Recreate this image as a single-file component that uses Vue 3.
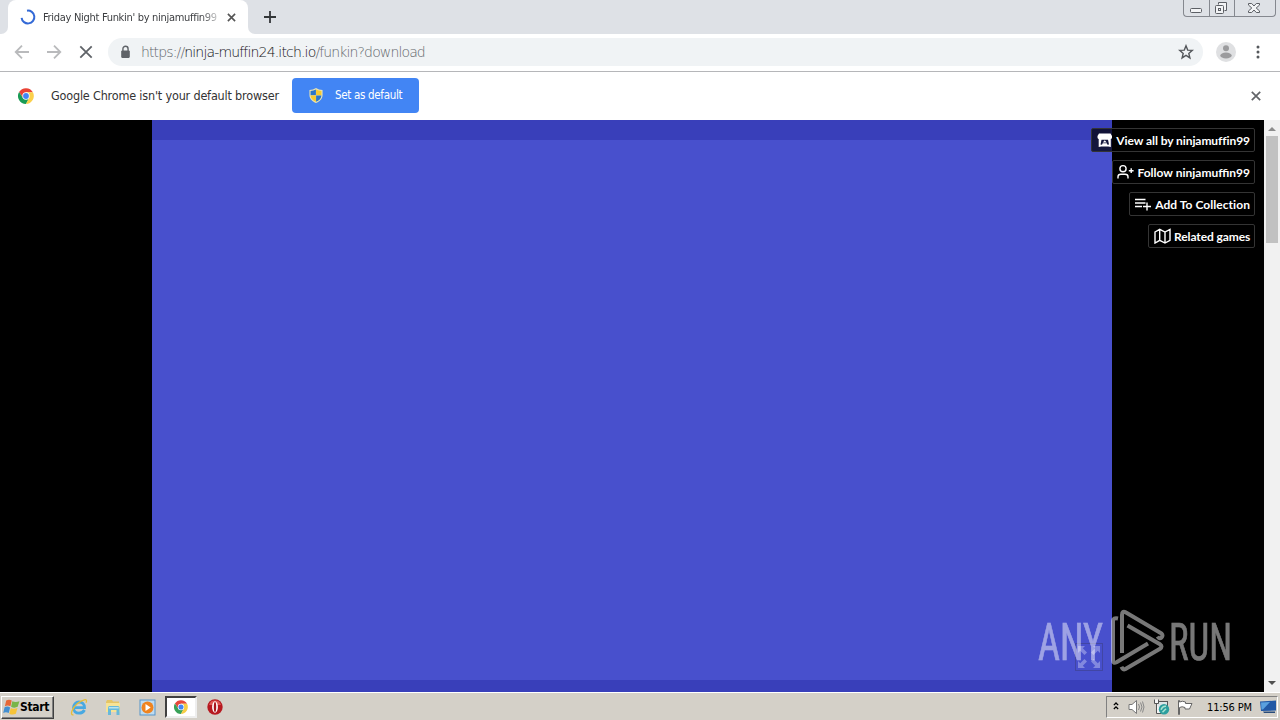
<template>
  <div class="screen">
    <!-- Tab strip -->
    <header class="tab-strip">
      <div class="tab-left-edge"></div>
      <div class="tab">
        <svg class="tab-spinner" viewBox="0 0 16 16">
          <path d="M7 1.700A6.400 6.400 0 1 1 1.600 8.800" />
        </svg>
        <span class="tab-title">Friday Night Funkin' by ninjamuffin99</span>
        <svg class="tab-close" viewBox="0 0 10 10"><path d="M1 1l8 8M9 1L1 9" /></svg>
      </div>
      <div class="tab-rest">
        <svg class="new-tab" viewBox="0 0 12 12"><path d="M6 0v12M0 6h12" /></svg>
      </div>
      <div class="window-buttons">
        <span class="win-btn">
          <svg width="14" height="16" viewBox="0 0 14 16"><rect x="1.5" y="8.500" width="11" height="4" rx="1" /></svg>
        </span>
        <span class="win-btn">
          <svg width="14" height="16" viewBox="0 0 14 16">
            <path d="M4.500 4.500v-2h8v8h-2" />
            <rect x="1.500" y="5.500" width="8" height="8" rx="1" />
            <rect x="4.500" y="8.500" width="2" height="2" />
          </svg>
        </span>
        <span class="win-btn wide">
          <svg width="14" height="16" viewBox="0 0 14 16">
            <path d="M1.500 3.500h3.200L7 6l2.300-2.500h3.200v1.600L9.200 8l3.300 2.900v1.600H9.300L7 10l-2.300 2.500H1.500v-1.600L4.800 8 1.500 5.100z" />
          </svg>
        </span>
      </div>
    </header>

    <!-- Toolbar -->
    <div class="toolbar">
      <svg class="nav-icon muted" viewBox="0 0 16 16"><path d="M15 8H2M8 1.700L1.700 8 8 14.300" /></svg>
      <svg class="nav-icon muted" viewBox="0 0 16 16"><path d="M1 8h13M8 1.700L14.300 8 8 14.300" /></svg>
      <svg class="nav-icon" viewBox="0 0 16 16"><path d="M2.300 2.300l11.400 11.400M13.700 2.300L2.300 13.700" /></svg>
      <div class="omnibox">
        <svg class="lock" viewBox="0 0 10 13">
          <path d="M2.600 5.500V3.600a2.400 2.400 0 0 1 4.800 0v1.900" fill="none" stroke="#5f6368" stroke-width="1.300" />
          <rect x="1" y="5" width="8" height="7" rx="1" fill="#5f6368" />
        </svg>
        <span class="url">https://<b>ninja-muffin24.itch.io</b>/funkin?download</span>
        <svg class="star" viewBox="0 0 16 16">
          <path d="M8 1.800l1.700 4.300 4.600.3-3.500 3 1.100 4.500L8 11.400l-3.900 2.500 1.100-4.500-3.500-3 4.600-.3z" />
        </svg>
      </div>
      <svg class="avatar" viewBox="0 0 20 20">
        <circle cx="10" cy="10" r="10" fill="#dfe0e2" />
        <circle cx="10" cy="6.200" r="3" fill="#9b9b9d" />
        <ellipse cx="10" cy="13.500" rx="5.700" ry="3" fill="#9b9b9d" />
      </svg>
      <svg class="kebab" viewBox="0 0 4 14">
        <circle cx="2" cy="2" r="1.500" /><circle cx="2" cy="7" r="1.500" /><circle cx="2" cy="12" r="1.500" />
      </svg>
    </div>

    <!-- Default browser prompt -->
    <div class="infobar">
      <svg class="chrome-logo" viewBox="0 0 48 48">
        <path fill="#ea4335" d="M24 13h20.800A24 24 0 0 0 3.200 12l11.300 17z" />
        <path fill="#199b55" d="M3.200 12A24 24 0 0 0 24 48l10-18.500H14.500z" />
        <path fill="#fbd04b" d="M44.800 13H24l9.500 16.500L24 48a24 24 0 0 0 20.800-35z" />
        <circle cx="24" cy="24" r="11" fill="#fff" />
        <circle cx="24" cy="24" r="8.700" fill="#4285f4" />
      </svg>
      <span class="info-text">Google Chrome isn't your default browser</span>
      <button class="default-btn">
        <svg class="shield" viewBox="0 0 14 16">
          <path fill="#e9e3b4" d="M7 0q3 2 7 2v5.500C14 12 10.500 14.700 7 16 3.500 14.700 0 12 0 7.500V2q4 0 7-2z" />
          <path fill="#2b76c8" d="M6.900 1.700v6H1.200V3.200Q4.500 3 6.900 1.700z" />
          <path fill="#f7ca2e" d="M7.100 1.700v6h5.700V3.200Q9.500 3 7.100 1.700z" />
          <path fill="#f7ca2e" d="M1.200 7.900h5.700v6.700C4 13.300 1.500 11.500 1.200 7.900z" />
          <path fill="#2b76c8" d="M12.800 7.900H7.100v6.700c2.900-1.300 5.400-3.100 5.700-6.700z" />
        </svg>
        <span>Set as default</span>
      </button>
      <svg class="info-close" viewBox="0 0 10 10"><path d="M.8.8l8.400 8.400M9.200.8L.8 9.200" /></svg>
    </div>

    <!-- Page -->
    <main class="page">
      <div class="game">
        <svg class="fullscreen" viewBox="0 0 28 28">
          <rect x=".5" y=".5" width="27" height="27" />
          <path d="M3 3h7L7.800 5.200l4.200 4.300-2.500 2.500-4.300-4.200L3 10zM25 3v7l-2.200-2.200-4.300 4.200L16 9.500l4.200-4.300L18 3zM3 25v-7l2.200 2.200L9.500 16l2.500 2.500-4.200 4.300L10 25zM25 25h-7l2.200-2.200-4.200-4.300 2.500-2.500 4.300 4.200L25 18z" />
        </svg>
      </div>

      <nav class="game-links">
        <a v-for="link in links" :key="link.label" class="game-link" :class="link.icon">
          <svg v-if="link.icon === 'itch'" width="16" height="16" viewBox="0 0 16 16">
            <path fill="#fff" d="M2 1.500h11.500L15 4v1.500c0 1-1 1.500-2 1.500H2.500c-1 0-2-.5-2-1.500V4z" />
            <path fill="#fff" fill-rule="evenodd" d="M1.700 6.500h12.100V15l-2.600-.6H4.300L1.700 15zM4.500 7.800l-1 4.700 1.500.2.700-1.400h4.100l.7 1.400 1.500-.2-1-4.700zM7.750 8.200l2 2.200h-4z" />
          </svg>
          <svg v-else-if="link.icon === 'follow'" width="17" height="16" viewBox="0 0 17 16">
            <path class="line" d="M1 14.500v-1.700c0-1.800 1.300-2.600 2.800-2.600h4.400c1.500 0 2.800.8 2.800 2.600v1.700M14.200 4.300v4.800M11.800 6.700h4.800" />
            <circle class="line" cx="6" cy="4.700" r="3.100" />
          </svg>
          <svg v-else-if="link.icon === 'collect'" width="17" height="16" viewBox="0 0 17 16">
            <path class="line" d="M0 3.500h10.500M0 7h10.500M0 10.500h7M12 6.500v8M8 10.500h8" />
          </svg>
          <svg v-else width="17" height="16" viewBox="0 0 17 16">
            <path class="line" d="M1 4l4.700-2.700L11 4l5-2.700v11L11 15l-5.300-2.700L1 15zM5.700 1.300v11M11 4v11" />
          </svg>
          <span class="link-label">{{ link.label }}</span>
        </a>
      </nav>

      <div class="scrollbar">
        <i class="arrow up"></i>
        <div class="thumb"></div>
        <i class="arrow down"></i>
      </div>

      <!-- Recorder watermark -->
      <svg class="watermark" viewBox="0 0 200 64">
        <text x="0" y="51" textLength="65" lengthAdjust="spacingAndGlyphs">ANY</text>
        <path d="M80 9.500q-5-1-5 2.500v39q0 4 3.500 2.200L110 34.500" />
        <path d="M84 44V6q0-5 4-2.500l35.500 21q2 2 0 4t-4-1" />
        <path d="M89.500 16.500l32.500 18.800q3 2.300 0 4.500L87 60.300q-2 1-3.500-2.500" />
        <text x="131" y="51" textLength="63" lengthAdjust="spacingAndGlyphs">RUN</text>
      </svg>
    </main>

    <!-- Taskbar -->
    <footer class="taskbar">
      <div class="start-btn">
        <svg width="17" height="17" viewBox="0 0 16 16">
          <path fill="#e66736" d="M3 1.500c2-1.300 3.700-1 5.200-.1L7 6.900c-1.700-1-3.500-1-5.200 0z" />
          <path fill="#79b548" d="M8.800 2c1.900 1 4.300 1 6.700 0l-1.700 5.400c-2 1-4.200 1-6.200-.1z" />
          <path fill="#438fd1" d="M1.500 7.800c1.800-1 3.500-.9 5.200.1l-1.300 5.300c-1.800-1-3.500-1-5.200 0z" />
          <path fill="#f7c438" d="M7.400 8.400c1.900 1 4 1.100 6.200.1l-1.500 5.400c-2 1-4.200 1-6.200-.1z" />
        </svg>
        <span>Start</span>
      </div>
      <div class="quick-launch">
        <span class="task-item">
          <svg width="18" height="18" viewBox="0 0 18 18">
            <path fill="none" stroke="#48a9e2" stroke-width="2.800" d="M14.500 12c-1.200 2.200-3 3.200-5.500 3.200-3.400 0-5.500-2.300-5.500-5.500S5.800 4 9 4s5.500 2.200 5.500 5.600h-10" />
            <path fill="none" stroke="#e6bd38" stroke-width="1.300" d="M3.500 16.800C-.5 17.800 1.800 10 7.500 5.500 12 1.800 18.500-.5 16 4.700" />
          </svg>
        </span>
        <span class="task-item">
          <svg width="18" height="18" viewBox="0 0 18 18">
            <path fill="#e5c565" d="M2 4l1-2h5l1 1.500h6v10H2z" />
            <path fill="#f7e395" d="M2 5h14v9H2z" />
            <path fill="#68b9d9" d="M4 9.500Q4 8 5.500 8h8.500q1.500 0 1.500 1.500V17h-3v-5H7v5H4z" />
            <path fill="#b8e4ee" d="M4.800 9h9.900v1.500H4.800z" />
          </svg>
        </span>
        <span class="task-item">
          <svg width="17" height="17" viewBox="0 0 17 17">
            <rect x="1" y="1" width="15" height="15" fill="#bfdcf0" stroke="#5795ca" />
            <circle cx="8.500" cy="8.500" r="6" fill="#ef8420" />
            <path fill="#fff" d="M6.500 5l5.200 3.500-5.200 3.500z" />
          </svg>
        </span>
        <span class="task-item active">
          <svg width="14" height="14" viewBox="0 0 48 48">
            <path fill="#e6473b" d="M24 13h20.800A24 24 0 0 0 3.200 12l11.300 17z" />
            <path fill="#38a158" d="M3.200 12A24 24 0 0 0 24 48l10-18.500H14.500z" />
            <path fill="#f6cd46" d="M44.800 13H24l9.500 16.500L24 48a24 24 0 0 0 20.800-35z" />
            <circle cx="24" cy="24" r="11" fill="#fff" />
            <circle cx="24" cy="24" r="8.700" fill="#4285f4" />
          </svg>
        </span>
        <span class="task-item">
          <svg width="16" height="16" viewBox="0 0 16 16">
            <circle cx="8" cy="8" r="7.700" fill="#b71920" />
            <path fill="#df5955" d="M2 6a6.300 6.300 0 0 1 12 0z" />
            <ellipse cx="8" cy="8" rx="2.900" ry="5.800" fill="#fff" />
            <ellipse cx="8" cy="8" rx="1.200" ry="5" fill="#a8141b" />
          </svg>
        </span>
      </div>

      <div class="tray">
        <svg class="chevrons" viewBox="0 0 7 10"><path d="M1 4l2.500-2.500L6 4M1 8.500L3.500 6 6 8.500" /></svg>
        <svg class="speaker" viewBox="0 0 17 16">
          <path fill="#fff" stroke="#777" d="M1 5.500h3L8.500 1.500v13L4 10.500H1z" />
          <path fill="none" stroke="#888" d="M10.500 5q2 3 0 6M12.500 3.500q3 4.500 0 9M14.500 2.500q3 5.500 0 11" />
        </svg>
        <svg class="network" viewBox="0 0 17 16">
          <rect x="3.500" y="2.500" width="11" height="9" fill="#dce5e7" stroke="#555" />
          <path fill="#f5f5f5" stroke="#555" d="M1.500.5v4h4v-4M3.500 4.500v10h5" />
          <circle cx="11" cy="10.300" r="5.200" fill="#2c9e9e" />
          <path fill="none" stroke="#a9e2d0" stroke-width="1.500" d="M8 10.800Q9.500 6.800 13 7.300M9.500 13.300l3.500-3.500" />
        </svg>
        <svg class="flag" viewBox="0 0 17 16">
          <path fill="#fff" stroke="#666" d="M2.500 15.500h-1v-14h1V3q3-1.500 6 0v1.500h6.500L12.500 10H8V8.500q-3-1.500-5.500 0z" />
        </svg>
        <span class="clock">11:56 PM</span>
        <svg class="desktop" viewBox="0 0 16 14">
          <path fill="#2258a5" d="M0 1.500L16 .5v10L1 11z" />
          <path fill="#5aa0df" d="M1 2.500l9-.6-7 7.500H1.500z" />
          <path fill="#284c7b" d="M3 11.500h12V13H4z" />
        </svg>
      </div>
    </footer>
  </div>
</template>

<script setup>
const links = [
  { icon: 'itch', label: 'View all by ninjamuffin99' },
  { icon: 'follow', label: 'Follow ninjamuffin99' },
  { icon: 'collect', label: 'Add To Collection' },
  { icon: 'related', label: 'Related games' },
]
</script>

<style>
body { margin: 0; overflow: hidden; }
</style>

<style scoped>
* { box-sizing: border-box; }
svg { display: block; flex-shrink: 0; }

.screen {
  width: 1280px;
  height: 720px;
  display: flex;
  flex-direction: column;
  background: #fff;
  font-family: "DejaVu Sans Condensed", "DejaVu Sans", "Open Sans", sans-serif;
  font-stretch: condensed;
  font-size: 11px;
  color: #333;
}

/* Tab strip */
.tab-strip {
  height: 34px;
  display: flex;
  flex-shrink: 0;
  background: #fff;
}

.tab-left-edge {
  width: 8px;
  background: #dee1e6;
  border-bottom-right-radius: 7px;
}

.tab {
  width: 240px;
  padding: 0 12px 0 12px;
  display: flex;
  align-items: center;
  background: #fff;
  border-radius: 8px 8px 0 0;
  box-shadow: 0 -8px 0 8px #dee1e6;
  clip-path: inset(0);
}

.tab-spinner { width: 16px; height: 16px; margin-right: 7px; }
.tab-spinner path { fill: none; stroke: #3369d6; stroke-width: 2; }

.tab-title {
  width: 178px;
  overflow: hidden;
  white-space: nowrap;
  line-height: 18px;
  padding-top: 1px;
  letter-spacing: -0.3px;
  color: #3c3e41;
  mask-image: linear-gradient(to right, #000 158px, transparent 180px);
}

.tab-close { width: 9px; height: 9px; margin-left: auto; }
.tab-close path { stroke: #555; stroke-width: 1.8; }

.tab-rest {
  flex: 1;
  display: flex;
  align-items: center;
  padding-left: 16px;
  background: #dee1e6;
  border-bottom-left-radius: 7px;
}

.new-tab { width: 12px; height: 12px; }
.new-tab path { stroke: #333639; stroke-width: 1.8; }

.window-buttons {
  display: flex;
  background: #dee1e6;
  padding-right: 4px;
}

.win-btn {
  height: 17px;
  width: 25px;
  display: flex;
  justify-content: center;
  border: 1px solid #85888f;
  border-width: 0 0 1px 1px;
}

.win-btn:first-child { width: 26px; border-bottom-left-radius: 4px; }
.win-btn.wide { width: 42px; border-right-width: 1px; border-bottom-right-radius: 4px; }
.win-btn svg { margin-left: -2px; fill: #f2f3f5; stroke: #5c5f65; }

/* Toolbar */
.toolbar {
  height: 38px;
  flex-shrink: 0;
  display: flex;
  align-items: center;
  padding: 0 20px 1px 14px;
  border-bottom: 1px solid #b5b6b9;
}

.nav-icon { width: 16px; height: 16px; margin-right: 16px; fill: none; stroke: #5f6368; stroke-width: 1.8; }
.nav-icon.muted { stroke: #b9babc; }

.omnibox {
  width: 1095px;
  height: 28px;
  margin-left: -2px;
  display: flex;
  align-items: center;
  padding: 0 9px 0 12px;
  border-radius: 14px;
  background: #f0f3f5;
}

.lock { width: 11px; height: 14px; margin-right: 10px; }

.url {
  font-family: "DejaVu Sans Light", "DejaVu Sans", sans-serif;
  font-stretch: normal;
  font-weight: 200;
  font-size: 14px;
  letter-spacing: -0.87px;
  color: #63676c;
}

.url b { font-weight: 200; color: #101114; }
.url b { letter-spacing: -0.83px; }

.star { width: 16px; height: 16px; margin-left: auto; fill: none; stroke: #54575b; stroke-width: 1.4; }
.avatar { width: 20px; height: 20px; margin-left: 13px; }
.kebab { width: 4px; height: 14px; margin-left: auto; fill: #55585c; }

/* Infobar */
.infobar {
  height: 48px;
  flex-shrink: 0;
  display: flex;
  align-items: center;
  padding: 0 19px 1px 18px;
}

.chrome-logo { width: 16px; height: 16px; }

.info-text {
  width: 241px;
  margin-left: 17px;
  white-space: nowrap;
  font-size: 12.5px;
  letter-spacing: -0.18px;
}

.default-btn {
  width: 127px;
  height: 35px;
  display: flex;
  align-items: center;
  padding: 0 0 0 17px;
  border: 0;
  border-radius: 4px;
  background: #4285f4;
  color: #fff;
  font: inherit;
  font-size: 11.5px;
  letter-spacing: -0.32px;
  white-space: nowrap;
}

.default-btn span { padding-bottom: 1px; }
.shield { width: 14px; height: 15px; margin-right: 12px; }
.info-close { width: 10px; height: 10px; margin-left: auto; }
.info-close path { stroke: #626468; stroke-width: 1.7; }

/* Page */
.page {
  position: relative;
  height: 572px;
  flex-shrink: 0;
  display: flex;
  justify-content: flex-end;
  background: #000;
}

.game {
  position: relative;
  width: 960px;
  border-top: 20px solid #393fba;
  border-bottom: 12px solid #393fba;
  background: #4850cd;
}

.fullscreen {
  position: absolute;
  right: 9px;
  bottom: 9px;
  width: 28px;
  height: 28px;
}

.fullscreen rect { fill: none; stroke: #4146a4; }
.fullscreen path { fill: #8288df; }

.game-links {
  width: 152px;
  padding: 8px 9px 0 0;
  display: flex;
  flex-direction: column;
  align-items: flex-end;
  gap: 8px;
  z-index: 1;
}

.game-link {
  height: 24px;
  display: flex;
  align-items: center;
  gap: 3px;
  padding: 0 4px 0 5px;
  border: 1px solid #343434;
  border-radius: 2px;
  background: rgba(0, 0, 0, 0.7);
  color: #fff;
  font-family: Lato, sans-serif;
  font-size: 12px;
  font-weight: 700;
  letter-spacing: -0.04px;
  white-space: nowrap;
}

.game-link.itch { width: 164px; letter-spacing: -0.07px; }
.game-link.follow { width: 143px; padding-left: 4px; letter-spacing: 0; }
.game-link.collect { width: 126px; letter-spacing: 0.05px; }
.game-link.related { width: 107px; letter-spacing: -0.1px; }
.link-label { margin-left: auto; }
.line { fill: none; stroke: #fff; stroke-width: 1.4; }

.scrollbar {
  width: 16px;
  display: flex;
  flex-direction: column;
  align-items: center;
  background: #f1f1f1;
}

.arrow { border: 4px solid transparent; }
.arrow.up { margin-top: 3px; border-bottom-color: #8c8c8c; }
.arrow.down { margin-top: auto; margin-bottom: 3px; border-top-color: #505050; }
.thumb { width: 12px; height: 107px; margin-top: 5px; background: #c1c1c1; }

.watermark {
  position: absolute;
  left: 1038px;
  top: 489px;
  width: 200px;
  height: 64px;
  overflow: visible;
  opacity: 0.47;
  z-index: 2;
}

.watermark text { font-family: Roboto, sans-serif; font-size: 52px; fill: #fff; stroke: #fff; stroke-width: 0.7; }
.watermark path { fill: none; stroke: #fff; stroke-width: 4; stroke-linejoin: round; }

/* Taskbar */
.taskbar {
  height: 28px;
  display: flex;
  align-items: center;
  padding: 2px 2px 1px 1px;
  background: #d4d0c8;
  border-top: 1px solid #fff;
  color: #000;
}

.start-btn {
  width: 53px;
  height: 23px;
  display: flex;
  align-items: center;
  padding-left: 1px;
  border: 1px solid;
  border-color: #fff #404040 #404040 #fff;
  box-shadow: inset -1px -1px #808080;
  font-size: 12px;
  font-weight: 700;
}

.start-btn span { letter-spacing: -0.35px; }

.quick-launch { display: flex; margin-left: 9px; }

.task-item {
  width: 32px;
  height: 22px;
  margin-right: 2px;
  display: flex;
  align-items: center;
  justify-content: center;
}

.task-item.active {
  background: #fff;
  border: 2px solid;
  border-color: #404040 #eee #eee #404040;
}

.tray {
  width: 172px;
  height: 22px;
  margin-left: auto;
  display: flex;
  align-items: center;
  padding-left: 6px;
  border: 1px solid;
  border-color: #808080 #fff #fff #808080;
}

.chevrons { width: 6px; height: 10px; margin-bottom: 3px; fill: none; stroke: #000; stroke-width: 1.5; }
.speaker { width: 17px; height: 16px; margin-left: 9px; }
.network { width: 17px; height: 16px; margin-left: 8px; }
.flag { width: 17px; height: 16px; margin-left: 7px; }
.clock { width: 53px; margin-left: 13px; white-space: nowrap; letter-spacing: -0.15px; }
.desktop { width: 16px; height: 14px; }
</style>
